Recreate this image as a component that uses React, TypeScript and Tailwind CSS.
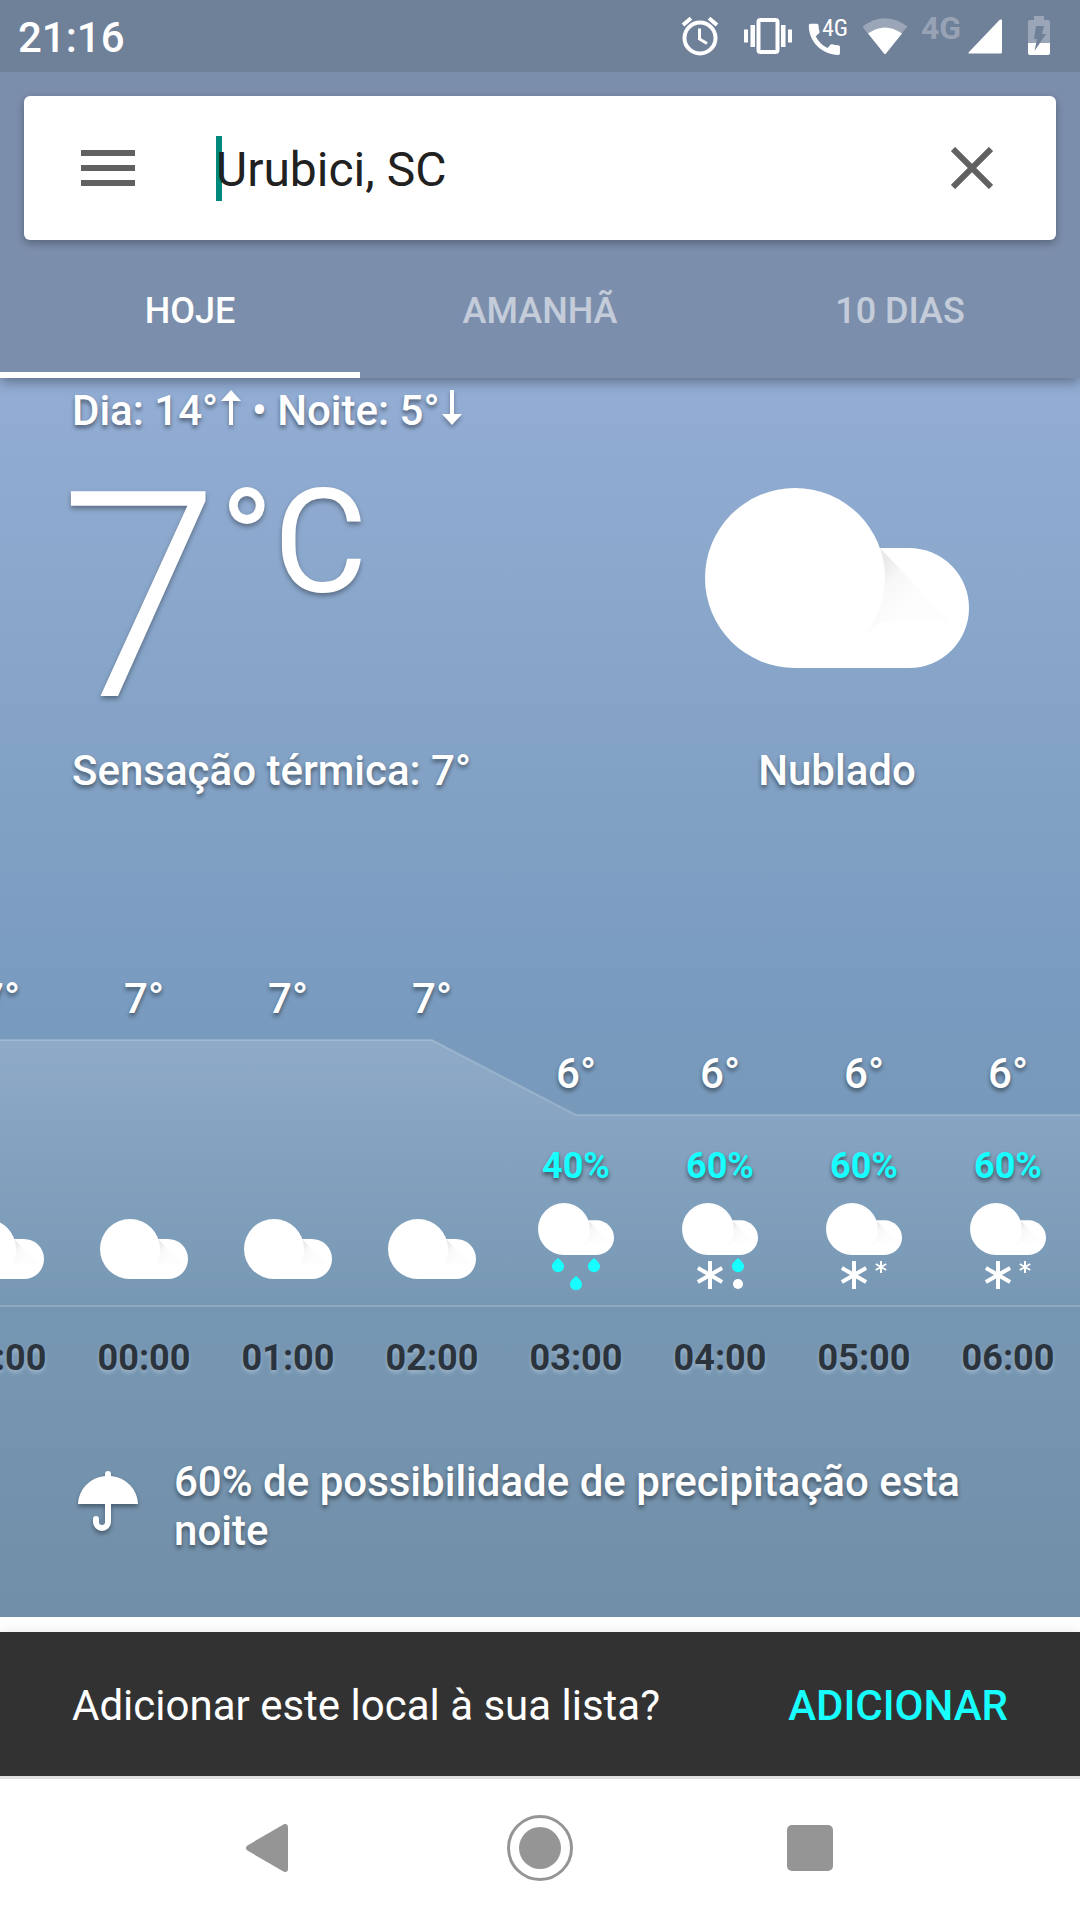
import React from "react";

const TEXT_SHADOW = "[text-shadow:0_3px_4px_rgba(0,0,0,0.45)]";

function Cloud({ id, className }: { id: string; className: string }) {
  return (
    <svg viewBox="0 0 264 180" className={className} aria-hidden="true">
      <defs>
        <linearGradient id={id} x1="172" y1="82" x2="205" y2="115" gradientUnits="userSpaceOnUse">
          <stop offset="0" stopColor="#eaeaea" />
          <stop offset="0.4" stopColor="#f8f8f8" />
          <stop offset="1" stopColor="#fdfdfd" />
        </linearGradient>
      </defs>
      <path d="M90 60H204a60 60 0 0 1 0 120H90z" fill="#fff" />
      <path d="M175 60L246 134H176L138 166z" fill={`url(#${id})`} />
      <circle cx="90" cy="90" r="90" fill="#fff" />
    </svg>
  );
}

function Drop({ x, y }: { x: number; y: number }) {
  return (
    <path
      transform={`translate(${x} ${y})`}
      d="M0 0C3 2.600 6 5 6 8.300A6 6 0 0 1 -6 8.300C-6 5 -3 2.600 0 0z"
      fill="#18ffff"
    />
  );
}

function Flake({ x, y, r, w }: { x: number; y: number; r: number; w: number }) {
  return (
    <g transform={`translate(${x} ${y})`} stroke="#fff" strokeWidth={w}>
      <path d={`M0 ${-r}V${r}`} />
      <path d={`M0 ${-r}V${r}`} transform="rotate(60)" />
      <path d={`M0 ${-r}V${r}`} transform="rotate(-60)" />
    </g>
  );
}

type Kind = "cloud" | "rain" | "sleet" | "snow";
type Hour = { time: string; temp: string; chance?: string; kind: Kind };

const hours: Hour[] = [
  { time: "23:00", temp: "7°", kind: "cloud" },
  { time: "00:00", temp: "7°", kind: "cloud" },
  { time: "01:00", temp: "7°", kind: "cloud" },
  { time: "02:00", temp: "7°", kind: "cloud" },
  { time: "03:00", temp: "6°", chance: "40%", kind: "rain" },
  { time: "04:00", temp: "6°", chance: "60%", kind: "sleet" },
  { time: "05:00", temp: "6°", chance: "60%", kind: "snow" },
  { time: "06:00", temp: "6°", chance: "60%", kind: "snow" },
];

function Precipitation({ kind }: { kind: Kind }) {
  return (
    <svg viewBox="0 0 88 36" className="h-9 w-[88px]" aria-hidden="true">
      {kind === "rain" && (
        <>
          <Drop x={26} y={3} />
          <Drop x={62} y={3} />
          <Drop x={44} y={21} />
        </>
      )}
      {kind === "sleet" && (
        <>
          <Flake x={34} y={20} r={14} w={4} />
          <Drop x={62} y={3} />
          <circle cx="62" cy="29" r="5" fill="#fff" />
        </>
      )}
      {kind === "snow" && (
        <>
          <Flake x={34} y={20} r={14} w={4} />
          <Flake x={61} y={12} r={6} w={2} />
        </>
      )}
    </svg>
  );
}

function HourCell({ hour }: { hour: Hour }) {
  const wet = hour.kind !== "cloud";
  return (
    <li className="flex h-[406px] w-36 shrink-0 flex-col items-center">
      <div className={wet ? "h-[75px]" : "h-0"} />
      <span className={`text-[42px] leading-[50px] font-medium text-white ${TEXT_SHADOW}`}>{hour.temp}</span>
      {wet ? (
        <>
          <span className="mt-[45px] text-4xl leading-[44px] font-bold text-[#18ffff] [text-shadow:0_3px_4px_rgba(0,0,0,0.5)]">
            {hour.chance}
          </span>
          <Cloud id={`shade-${hour.time}`} className="mt-[15px] h-[52px] w-[76px]" />
          <Precipitation kind={hour.kind} />
        </>
      ) : (
        <Cloud id={`shade-${hour.time}`} className="mt-[195px] h-[60px] w-[88px]" />
      )}
      <time className="mt-auto text-4xl leading-[44px] font-bold text-[#2b343c] [text-shadow:0_3px_4px_rgba(255,255,255,0.3)]">
        {hour.time}
      </time>
    </li>
  );
}

function StatusBar() {
  return (
    <div className="flex h-[72px] items-center justify-between bg-[#6f8099] pl-[18px] pr-[29px]">
      <span className="pt-1 text-[42px] leading-[50px] font-medium text-white">21:16</span>
      <div className="flex items-center">
        <svg viewBox="0 0 38 40" className="h-10 w-[38px]" fill="none" stroke="#fff">
          <circle cx="19" cy="22" r="15.500" strokeWidth="4" />
          <path d="M18.500 12.500v10.500l7.500 4.500" strokeWidth="3" />
          <path d="M2 9L10 2.300M36 9L28 2.300" strokeWidth="4" />
        </svg>
        <svg viewBox="0 0 50 38" className="ml-6 h-[38px] w-[50px]" fill="#fff">
          <rect x="15.500" y="3" width="19" height="32" rx="2" fill="none" stroke="#fff" strokeWidth="4" />
          <path d="M7.500 8h4.500v22H7.500zM38 8h4.500v22H38zM1 12.500h4v13H1zM45 12.500h4v13h-4z" />
        </svg>
        <svg viewBox="0 0 40 40" className="ml-[15px] h-10 w-10 overflow-visible">
          <path
            transform="translate(-4.400 2.600) scale(1.730)"
            fill="#fff"
            d="M20.010 15.380c-1.230 0-2.420-.2-3.530-.56a.98.980 0 0 0-1.010.24l-1.570 1.970c-2.830-1.350-5.480-3.900-6.890-6.830l1.950-1.660c.27-.28.35-.67.24-1.020-.37-1.110-.56-2.300-.56-3.530 0-.54-.45-.99-.99-.99H4.190C3.650 3 3 3.240 3 3.990 3 13.280 10.730 21 20.010 21c.71 0 .99-.63.99-1.180v-3.450c0-.54-.45-.99-.99-.99z"
          />
          <text x="14" y="20" fill="#fff" fontFamily="Roboto Condensed, Roboto" fontSize="24">4G</text>
        </svg>
        <svg viewBox="0 0 46 36" className="ml-3.5 h-9 w-[46px]">
          <path d="M0.500 8.500Q23 -8 45.500 8.500L39 16H6z" fill="#fff" fillOpacity="0.3" />
          <path d="M6 15.500Q23 3.500 40 15.500L24 35.500q-1 1-2 0z" fill="#fff" />
        </svg>
        <svg viewBox="0 0 82 38" className="ml-[13px] h-[38px] w-[82px] overflow-visible">
          <text x="0" y="22" fill="#fff" fillOpacity="0.3" fontFamily="Roboto" fontWeight="700" fontSize="32">4G</text>
          <path d="M48 35L78.500 3q2.500-2 2.500 1v31q0 1.500-1.500 1.500H48.500q-2 0-.5-1.500z" fill="#fff" />
        </svg>
        <svg viewBox="0 0 24 40" className="ml-6 h-10 w-6">
          <path d="M7 0h10v4h4q2 0 2 2v21H1V6q0-2 2-2h4z" fill="#fff" fillOpacity="0.3" />
          <path d="M1 27h22v10q0 2-2 2H3q-2 0-2-2z" fill="#fff" />
          <path d="M9 10h8l-2 8h4L7.500 35 10 23H7z" fill="#6f8099" />
        </svg>
      </div>
    </div>
  );
}

const tabs = ["HOJE", "AMANHÃ", "10 DIAS"];

export default function App() {
  return (
    <div className="flex min-h-screen flex-col overflow-hidden bg-white font-['Roboto',sans-serif]">
      <header className="relative z-10 bg-[#7b8eac] shadow-[0_4px_12px_rgba(0,0,0,0.35)]">
        <StatusBar />
        <div className="px-6 pt-6">
          <form className="flex h-36 items-center rounded-md bg-white px-12 shadow-[0_3px_8px_rgba(0,0,0,0.3)]">
            <button type="button" aria-label="Menu" className="flex h-[72px] w-[72px] items-center justify-center">
              <span className="flex w-[54px] flex-col gap-[9px]">
                <span className="h-1.5 bg-[#616161]" />
                <span className="h-1.5 bg-[#616161]" />
                <span className="h-1.5 bg-[#616161]" />
              </span>
            </button>
            <span className="ml-[72px] h-[65px] w-1.5 bg-[#00897b]" />
            <input
              aria-label="Local"
              defaultValue="Urubici, SC"
              className="-ml-1.5 h-16 min-w-0 flex-1 bg-transparent pt-0.5 text-5xl text-[#212121] outline-none"
            />
            <button type="button" aria-label="Limpar" className="flex h-[72px] w-[72px] items-center justify-center">
              <svg viewBox="0 0 42 42" className="h-[42px] w-[42px]" stroke="#616161" strokeWidth="6">
                <path d="M2 2L40 40M40 2L2 40" />
              </svg>
            </button>
          </form>
        </div>
        <nav className="grid h-[138px] grid-cols-3" role="tablist">
          {tabs.map((tab, i) => (
            <button
              key={tab}
              type="button"
              role="tab"
              aria-selected={i === 0}
              className={
                i === 0
                  ? "border-b-6 border-white pl-5 pt-2.5 text-4xl font-medium text-white"
                  : "border-b-6 border-transparent pt-2.5 text-4xl font-medium text-white/55"
              }
            >
              {tab}
            </button>
          ))}
        </nav>
      </header>

      <main className="bg-[linear-gradient(180deg,#93add4_0%,#84a3c6_29%,#799bbf_50%,#7697b4_72%,#728fa8_100%)]">
        <section className="flex justify-between pl-[72px] pr-[111px] text-[42px] leading-[50px] font-medium text-white">
          <div>
            <p className={`flex items-start pt-2 ${TEXT_SHADOW}`}>
              Dia: 14°
              <svg viewBox="0 0 20 36" className="ml-[3px] mt-1 h-9 w-5 drop-shadow-[0_3px_2px_rgba(0,0,0,0.3)]">
                <path d="M10 0L20 11H12V35H8V11H0z" fill="#fff" />
              </svg>
              <span className="ml-[11px]">• Noite: 5°</span>
              <svg viewBox="0 0 20 36" className="ml-[3px] mt-1 h-9 w-5 drop-shadow-[0_3px_2px_rgba(0,0,0,0.3)]">
                <path d="M10 35L20 24H12V0H8V24H0z" fill="#fff" />
              </svg>
            </p>
            <p className="mt-3.5 flex items-start [text-shadow:0_3px_5px_rgba(0,0,0,0.35)]">
              <span className="-ml-3 text-[288px] leading-[296px] font-light">7</span>
              <span className="mt-2 text-[144px] leading-[170px] font-normal">°C</span>
            </p>
            <p className={TEXT_SHADOW}>Sensação térmica: 7°</p>
          </div>
          <div className="flex flex-col items-center pt-[110px]">
            <Cloud id="shade-now" className="h-[180px] w-[264px]" />
            <p className={`mt-[78px] ${TEXT_SHADOW}`}>Nublado</p>
          </div>
        </section>

        <section className="relative mt-[178px]" aria-label="Previsão por hora">
          <svg
            viewBox="0 0 1080 270"
            preserveAspectRatio="none"
            className="absolute inset-x-0 top-16 h-[270px] w-full"
            aria-hidden="true"
          >
            <defs>
              <linearGradient id="area" x1="0" y1="0" x2="0" y2="1">
                <stop offset="0" stopColor="#fff" stopOpacity="0.16" />
                <stop offset="1" stopColor="#fff" stopOpacity="0.01" />
              </linearGradient>
            </defs>
            <path d="M0 2H432L576 77H1080V268H0z" fill="url(#area)" />
            <path d="M0 2H432L576 77H1080M0 268H1080" fill="none" stroke="#fff" strokeOpacity="0.18" strokeWidth="2" />
          </svg>
          <ul className="relative -ml-[72px] flex">
            {hours.map((hour) => (
              <HourCell key={hour.time} hour={hour} />
            ))}
          </ul>
        </section>

        <section className="flex items-start gap-9 pb-[62px] pl-[78px] pr-16 pt-[77px] text-white">
          <svg viewBox="0 0 60 60" className="mt-3.5 h-[60px] w-[60px] shrink-0 overflow-visible drop-shadow-[0_3px_2px_rgba(0,0,0,0.35)]">
            <path d="M27 5V3a3 3 0 0 1 6 0V5A30 29 0 0 1 60 33H0A30 29 0 0 1 27 5z" fill="#fff" />
            <path d="M30 32V51a6 6 0 0 1 -12 0V48" fill="none" stroke="#fff" strokeWidth="6" strokeLinecap="round" />
          </svg>
          <p className={`text-[42px] leading-[49px] font-medium ${TEXT_SHADOW}`}>
            60% de possibilidade de precipitação esta noite
          </p>
        </section>
      </main>

      <div className="mt-[15px] flex h-36 items-center justify-between bg-[#323232] px-[72px] pt-0.5 text-[42px] text-white shadow-[0_0_12px_rgba(0,0,0,0.1)]">
        <span>Adicionar este local à sua lista?</span>
        <button type="button" className="font-medium text-[#18ffff]">
          ADICIONAR
        </button>
      </div>

      <nav className="flex h-36 justify-center border-t-3 border-[#e0e0e0] bg-white pb-[3px]" aria-label="Sistema">
        <button type="button" aria-label="Voltar" className="flex w-1/4 items-center justify-center">
          <svg viewBox="0 0 48 48" className="h-12 w-12" fill="#959595" stroke="#959595" strokeWidth="6" strokeLinejoin="round">
            <path d="M3 24L39 3V45z" />
          </svg>
        </button>
        <button type="button" aria-label="Início" className="flex w-1/4 items-center justify-center">
          <svg viewBox="0 0 66 66" className="h-[66px] w-[66px]">
            <circle cx="33" cy="33" r="31.500" fill="none" stroke="#959595" strokeWidth="3" />
            <circle cx="33" cy="33" r="21" fill="#959595" />
          </svg>
        </button>
        <button type="button" aria-label="Recentes" className="flex w-1/4 items-center justify-center">
          <span className="h-[46px] w-[46px] rounded-[5px] bg-[#959595]" />
        </button>
      </nav>
    </div>
  );
}
